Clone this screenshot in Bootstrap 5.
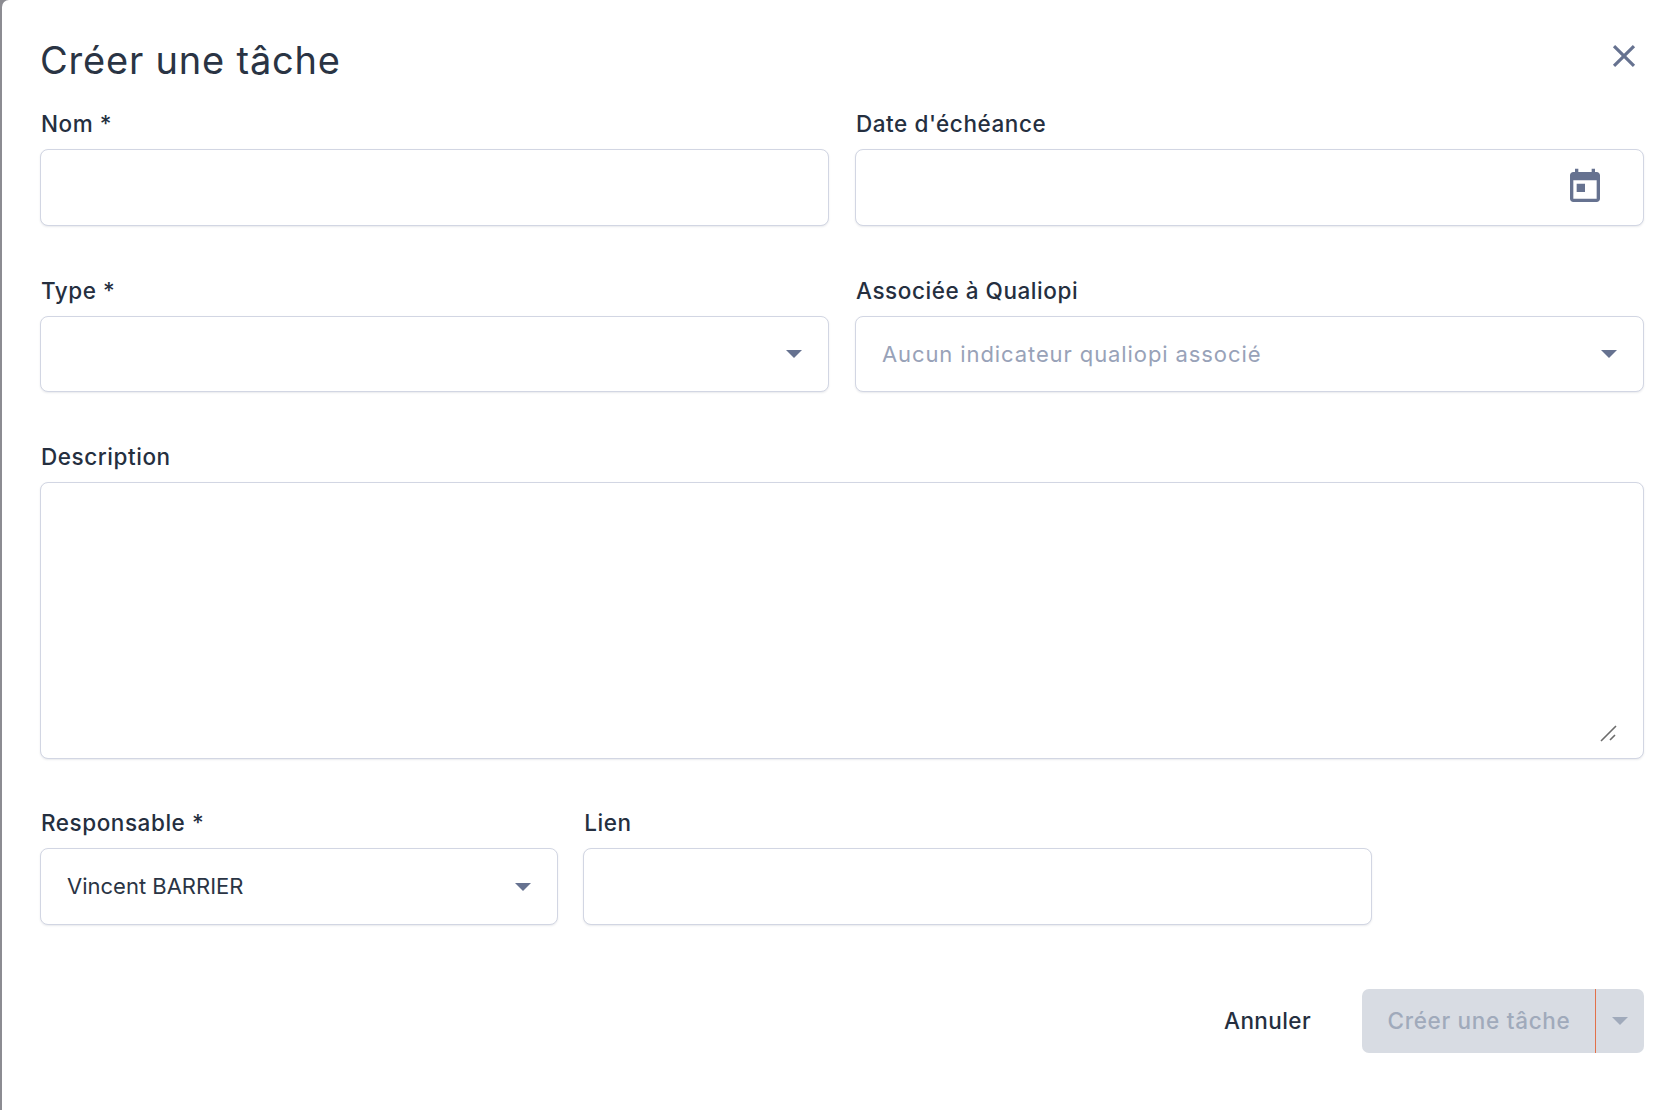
<!DOCTYPE html>
<html lang="fr">
<head>
<meta charset="utf-8">
<title>Créer une tâche</title>
<link href="https://cdn.jsdelivr.net/npm/bootstrap@5.3.0/dist/css/bootstrap.min.css" rel="stylesheet">
<style>
html,body{height:100%;overflow:hidden}
body{background:#8c8c92;font-family:Inter,"Liberation Sans",sans-serif;color:#252f3f}
.sheet{margin-left:2px;height:1110px;background:#fff;border-top-left-radius:7px;padding:0 34px 0 38px}
.sheet-head{height:112px;padding-top:36px}
.sheet-title{font-size:38px;line-height:48px;font-weight:400;color:#2a3444;letter-spacing:.8px;margin:0}
.close-x{width:38px;height:38px;padding:0;border:0;background:none;margin-top:1px;margin-right:1px;margin-left:auto;color:#667290;display:block}
.close-x svg,.cal-ico{fill:currentColor;display:block}
.grid-row{--bs-gutter-x:26px;--bs-gutter-y:0}
.gap-a{margin-bottom:53px}
.gap-b{margin-bottom:53px}
.gap-c{margin-bottom:52px}
.gap-d{margin-bottom:64px}
.form-label.fld-label{display:block;font-size:22.5px;line-height:24px;font-weight:500;margin:0 0 13px 1px;color:#252f3f;letter-spacing:.55px}
.form-control.fld,.form-select.fld{height:76px;border:1px solid #d2d6e3;border-radius:8px;box-shadow:0 1px 2px rgba(40,50,80,.1);padding:0 56px 0 26px;font-size:22px;color:#2a3444;background-color:#fff}
.form-control.fld.tall,.form-select.fld.tall{height:77px}
.form-select.fld.wide{width:calc(100% + 1px)}
.form-select.fld{background-image:url("data:image/svg+xml,%3Csvg xmlns='http://www.w3.org/2000/svg' width='16' height='8'%3E%3Cpath d='M0 0h16L8 8z' fill='%23667290'/%3E%3C/svg%3E");background-position:right 26px center;background-size:16px 8px}
.form-select.fld.is-empty{color:#98a2b8;letter-spacing:.9px}
textarea.form-control.fld{height:277px;resize:none}
.field-wrap{position:relative}
.cal-ico{position:absolute;right:39px;top:18px;width:40px;height:40px;color:#667290}
.grip{position:absolute;right:27px;bottom:17px;width:17px;height:17px}
.btn.cancel-btn{font-size:22.5px;font-weight:500;color:#252f3f;border:0;padding:0;margin-right:51px;letter-spacing:.4px}
.btn-group.action-grp{height:64px}
.btn.action-main,.btn.action-caret{background:#d8dce3;color:#a0aabb;border:0;font-size:22.5px;font-weight:500;opacity:1;letter-spacing:.7px}
.btn.action-main{width:234px;padding:0;border-radius:7px 0 0 7px}
.btn.action-caret{width:49px;padding:0;border-radius:0 7px 7px 0;border-left:1px solid #e2714a;display:flex;align-items:center;justify-content:center}
.action-caret svg{display:block;fill:#a0aabb}
</style>
</head>
<body>
<div class="sheet">
  <header class="sheet-head d-flex align-items-start">
    <h1 class="sheet-title">Créer une tâche</h1>
    <button class="close-x" type="button" aria-label="Fermer">
      <svg viewBox="0 0 24 24" width="38" height="38"><path d="M19 6.41 17.59 5 12 10.59 6.41 5 5 6.41 10.59 12 5 17.59 6.41 19 12 13.41 17.59 19 19 17.59 13.41 12z"/></svg>
    </button>
  </header>
  <form>
    <div class="row grid-row gap-a">
      <div class="col-6">
        <label class="form-label fld-label">Nom *</label>
        <input class="form-control fld tall" type="text">
      </div>
      <div class="col-6">
        <label class="form-label fld-label">Date d'échéance</label>
        <div class="field-wrap">
          <input class="form-control fld tall" type="text">
          <svg class="cal-ico" viewBox="0 0 24 24"><path d="M19 3h-1V1h-2v2H8V1H6v2H5c-1.11 0-1.99.9-1.99 2L3 19c0 1.1.89 2 2 2h14c1.1 0 2-.9 2-2V5c0-1.1-.9-2-2-2zm0 16H5V8h14v11zM7 10h5v5H7z"/></svg>
        </div>
      </div>
    </div>
    <div class="row grid-row gap-b">
      <div class="col-6">
        <label class="form-label fld-label">Type *</label>
        <select class="form-select fld"><option></option></select>
      </div>
      <div class="col-6">
        <label class="form-label fld-label">Associée à Qualiopi</label>
        <select class="form-select fld is-empty"><option>Aucun indicateur qualiopi associé</option></select>
      </div>
    </div>
    <div class="row grid-row gap-c">
      <div class="col-12">
        <label class="form-label fld-label">Description</label>
        <div class="field-wrap">
          <textarea class="form-control fld"></textarea>
          <svg class="grip" viewBox="0 0 17 17"><path d="M1 16 16 1M10 15l5-5" stroke="#6c6c6c" stroke-width="1.6" fill="none"/></svg>
        </div>
      </div>
    </div>
    <div class="row grid-row gap-d">
      <div class="col-4">
        <label class="form-label fld-label">Responsable *</label>
        <select class="form-select fld tall wide"><option>Vincent BARRIER</option></select>
      </div>
      <div class="col-6">
        <label class="form-label fld-label">Lien</label>
        <input class="form-control fld tall" type="text">
      </div>
    </div>
    <div class="d-flex justify-content-end align-items-center">
      <button class="btn cancel-btn" type="button">Annuler</button>
      <div class="btn-group action-grp">
        <button class="btn action-main" type="button" disabled>Créer une tâche</button>
        <button class="btn action-caret" type="button" disabled aria-label="Plus"><svg width="16" height="8"><path d="M0 0h16L8 8z"/></svg></button>
      </div>
    </div>
  </form>
</div>
<script src="https://cdn.jsdelivr.net/npm/bootstrap@5.3.0/dist/js/bootstrap.bundle.min.js"></script>
</body>
</html>
